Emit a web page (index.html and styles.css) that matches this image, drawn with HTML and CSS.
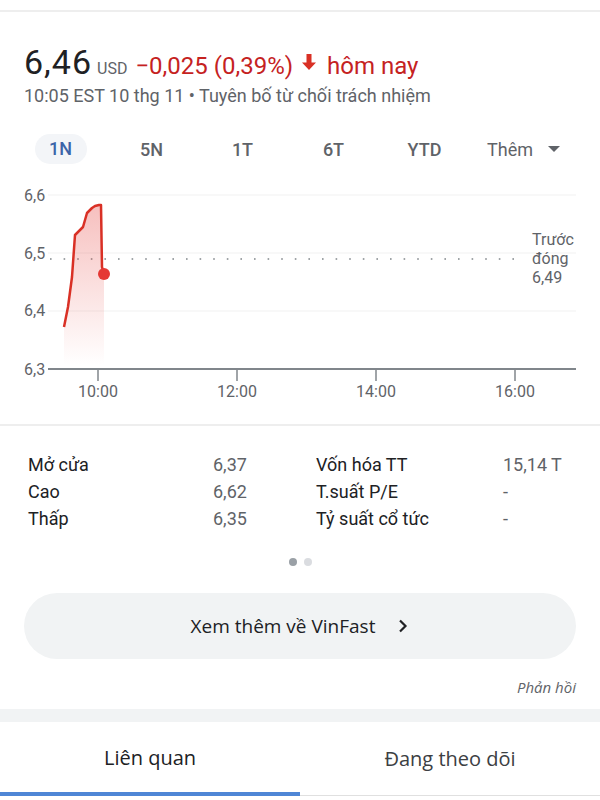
FILE: index.html
```html
<!DOCTYPE html>
<html lang="vi">
<head>
  <meta charset="UTF-8" />
  <title>VinFast – Cổ phiếu</title>
  <link rel="stylesheet" href="styles.css">
</head>
<body>
  <div class="topline"></div>

  <section class="quote">
    <div class="price-row">
      <span class="price">6,46</span>
      <span class="currency">USD</span>
      <span class="change">−0,025 (0,39%)</span>
      <svg class="arrow" width="16" height="18" viewBox="0 0 16 18">
        <path d="M8 17 L1 9.5 H5.5 V1 H10.5 V9.5 H15 Z" fill="#d93025"/>
      </svg>
      <span class="change">hôm nay</span>
    </div>
    <div class="sub">10:05 EST 10 thg 11 • Tuyên bố từ chối trách nhiệm</div>
  </section>

  <nav class="ranges">
    <span class="range active"><span class="pill">1N</span></span>
    <span class="range">5N</span>
    <span class="range">1T</span>
    <span class="range">6T</span>
    <span class="range">YTD</span>
    <span class="range more">Thêm <svg width="14" height="8" viewBox="0 0 14 8"><path d="M1 1 H13 L7 7 Z" fill="#5f6368"/></svg></span>
  </nav>

  <svg class="chart" width="600" height="240" viewBox="0 0 600 240">
    <defs>
      <linearGradient id="fillRed" x1="0" y1="0" x2="0" y2="1">
        <stop offset="0" stop-color="#e53935" stop-opacity="0.32"/>
        <stop offset="1" stop-color="#e53935" stop-opacity="0"/>
      </linearGradient>
    </defs>
    <g stroke="#f1f1f1" stroke-width="1">
      <line x1="48" y1="20" x2="576" y2="20"/>
      <line x1="48" y1="78" x2="576" y2="78"/>
      <line x1="48" y1="136" x2="576" y2="136"/>
    </g>
    <line x1="50" y1="84" x2="524" y2="84" stroke="#80868b" stroke-width="1.6" stroke-dasharray="1.6 12"/>
    <path d="M64 152 L68 132 L72 102 L75 60 L80 55 L83 52 L87 38 L92 33 L95 31 L99 30 L101 30 L102 92 L104 99 L104 190 L64 190 Z" fill="url(#fillRed)"/>
    <path d="M64 152 L68 132 L72 102 L75 60 L80 55 L83 52 L87 38 L92 33 L95 31 L99 30 L101 30 L102 92 L104 99" fill="none" stroke="#d93025" stroke-width="2.5" stroke-linejoin="round"/>
    <circle cx="104" cy="99" r="6" fill="#e53935"/>
    <line x1="48" y1="194" x2="576" y2="194" stroke="#80868b" stroke-width="2"/>
    <g stroke="#80868b" stroke-width="1.5">
      <line x1="98" y1="194" x2="98" y2="206"/>
      <line x1="237" y1="194" x2="237" y2="206"/>
      <line x1="376" y1="194" x2="376" y2="206"/>
      <line x1="515" y1="194" x2="515" y2="206"/>
    </g>
    <g class="axis-text">
      <text x="24" y="26">6,6</text>
      <text x="24" y="84">6,5</text>
      <text x="24" y="141">6,4</text>
      <text x="24" y="200">6,3</text>
      <text x="98" y="222" text-anchor="middle">10:00</text>
      <text x="237" y="222" text-anchor="middle">12:00</text>
      <text x="376" y="222" text-anchor="middle">14:00</text>
      <text x="515" y="222" text-anchor="middle">16:00</text>
      <text x="532" y="70">Trước</text>
      <text x="532" y="89">đóng</text>
      <text x="532" y="108">6,49</text>
    </g>
  </svg>

  <section class="stats">
    <span class="label">Mở cửa</span><span class="value">6,37</span>
    <span class="label">Vốn hóa TT</span><span class="value">15,14 T</span>
    <span class="label">Cao</span><span class="value">6,62</span>
    <span class="label">T.suất P/E</span><span class="value">-</span>
    <span class="label">Thấp</span><span class="value">6,35</span>
    <span class="label">Tỷ suất cổ tức</span><span class="value">-</span>
  </section>

  <div class="pager">
    <span class="dot on"></span>
    <span class="dot"></span>
  </div>

  <a class="more-button" href="#">Xem thêm về VinFast
    <svg width="12" height="14" viewBox="0 0 12 14"><path d="M3 1.5 L8.5 7 L3 12.5" fill="none" stroke="#202124" stroke-width="2.2"/></svg>
  </a>

  <div class="feedback">Phản hồi</div>

  <div class="band"></div>

  <nav class="bottom-tabs">
    <span class="btab selected">Liên quan</span>
    <span class="btab">Đang theo dõi</span>
  </nav>
</body>
</html>
```

FILE: styles.css
```css
body {
  margin: 0;
  background-color: #ffffff;
  font-family: Roboto, "Liberation Sans", Arial, sans-serif;
  color: #202124;
  width: 600px;
  height: 800px;
  overflow: hidden;
}

.topline {
  height: 10px;
  border-bottom: 2px solid #eeeeee;
}

.quote {
  padding: 30px 24px 0;
}

.price-row {
  display: flex;
  align-items: baseline;
  height: 40px;
  line-height: 40px;
}

.price {
  font-size: 34px;
  letter-spacing: 1px;
  color: #202124;
}

.currency {
  margin-left: 5px;
  font-size: 16px;
  color: #5f6368;
}

.change {
  margin-left: 8px;
  font-size: 24px;
  color: #c5221f;
}

.arrow {
  align-self: center;
  margin-left: 8px;
  margin-right: 2px;
}

.sub {
  margin-top: 3px;
  font-size: 18px;
  line-height: 22px;
  color: #5f6368;
}

.ranges {
  display: flex;
  align-items: center;
  padding: 0 0 0 15px;
  margin-top: 27px;
  height: 30px;
}

.range {
  width: 91px;
  text-align: center;
  font-size: 18px;
  font-weight: 500;
  color: #5f6368;
}

.range .pill {
  display: inline-block;
  width: 52px;
  height: 30px;
  line-height: 30px;
  border-radius: 15px;
  background-color: #f3f5f8;
  color: #3c64a8;
}

.range.more {
  width: auto;
  padding-left: 17px;
  font-weight: 400;
  display: flex;
  align-items: center;
  gap: 14px;
}

.chart {
  display: block;
  margin-top: 11px;
}

.axis-text text {
  font-family: Roboto, "Liberation Sans", Arial, sans-serif;
  font-size: 16px;
  fill: #5f6368;
}

.stats {
  margin-top: 9px;
  border-top: 2px solid #eeeeee;
  padding: 25px 0 0 28px;
  display: grid;
  grid-template-columns: 185px 103px 187px auto;
  grid-auto-rows: 27px;
  align-items: center;
  font-size: 18px;
}

.stats .label {
  color: #202124;
}

.stats .value {
  color: #5f6368;
}

.pager {
  display: flex;
  justify-content: center;
  gap: 7px;
  margin-top: 26px;
}

.dot {
  width: 8px;
  height: 8px;
  border-radius: 50%;
  background-color: #dadce0;
}

.dot.on {
  background-color: #9aa0a6;
}

.more-button {
  display: flex;
  justify-content: center;
  align-items: center;
  gap: 22px;
  margin: 27px 24px 0;
  height: 66px;
  border-radius: 33px;
  background-color: #f1f3f4;
  color: #202124;
  text-decoration: none;
  font-family: "Open Sans", Roboto, sans-serif;
  font-size: 19px;
}

.feedback {
  margin: 19px 24px 0;
  text-align: right;
  font-family: "Open Sans", Roboto, sans-serif;
  font-size: 15px;
  line-height: 18px;
  font-style: italic;
  color: #5f6368;
}

.band {
  margin-top: 13px;
  height: 13px;
  background-color: #f1f3f4;
}

.bottom-tabs {
  display: flex;
  height: 74px;
}

.btab {
  flex: 1;
  display: flex;
  align-items: center;
  justify-content: center;
  font-family: "Open Sans", Roboto, sans-serif;
  font-size: 20px;
  font-weight: 500;
  color: #3c4043;
  border-bottom: 1px solid #e0e0e0;
}

.btab.selected {
  color: #202124;
  border-bottom: 4px solid #4f86d6;
}
```
